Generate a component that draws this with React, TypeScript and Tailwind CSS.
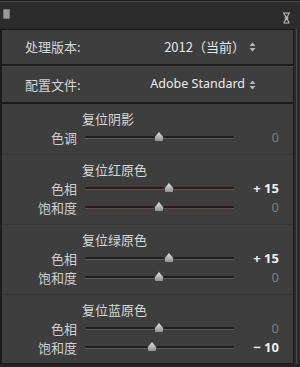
const FONT = { fontFamily: '"Noto Sans CJK SC", "Noto Sans", sans-serif' };

type Row = { label: string; value: string; pos: number; bright?: boolean; red?: boolean };
type Section = { title: string; rows: Row[]; last?: boolean };

const sections: Section[] = [
  { title: '复位阴影', rows: [{ label: '色调', value: '0', pos: 0 }] },
  {
    title: '复位红原色',
    rows: [
      { label: '色相', value: '+ 15', pos: 15, bright: true, red: true },
      { label: '饱和度', value: '0', pos: 0, red: true },
    ],
  },
  {
    title: '复位绿原色',
    rows: [
      { label: '色相', value: '+ 15', pos: 15, bright: true },
      { label: '饱和度', value: '0', pos: 0 },
    ],
  },
  {
    title: '复位蓝原色',
    rows: [
      { label: '色相', value: '0', pos: 0 },
      { label: '饱和度', value: '− 10', pos: -10, bright: true },
    ],
    last: true,
  },
];

function Thumb() {
  return (
    <svg width="10" height="11" viewBox="0 0 10 11">
      <defs>
        <linearGradient id="tg" x1="0" y1="0" x2="0" y2="1">
          <stop offset="0" stopColor="#e6e6e6" />
          <stop offset="1" stopColor="#8c8c8c" />
        </linearGradient>
      </defs>
      <path d="M5 0.5 L9.5 6 L9.5 9 Q9.5 10.5 8 10.5 L2 10.5 Q0.5 10.5 0.5 9 L0.5 6 Z" fill="url(#tg)" stroke="#2a2a2a" strokeWidth="0.6" />
    </svg>
  );
}

function Slider({ pos, red }: { pos: number; red?: boolean }) {
  // track spans 149px, center at 0, range roughly -100..100
  const left = 74 + pos * 0.68;
  return (
    <div className="relative w-[149px] h-[19px] flex items-center">
      <div className="w-full flex flex-col">
        <div className={`h-[2px] rounded-full ${red ? 'bg-[#2a1c1c]' : 'bg-[#1e1e1e]'}`} />
        <div className={`h-[1px] ${red ? 'bg-[#6a4a4a]' : 'bg-[#5c5c5c]'}`} />
      </div>
      <div className="absolute top-[3px]" style={{ left: left - 5 }}>
        <Thumb />
      </div>
    </div>
  );
}

function Arrows() {
  return (
    <svg width="7" height="10" viewBox="0 0 7 10" className="ml-[4px]">
      <path d="M3.5 0.5 L6.5 4 L0.5 4 Z" fill="#b5b5b5" />
      <path d="M3.5 9.5 L6.5 6 L0.5 6 Z" fill="#b5b5b5" />
    </svg>
  );
}

export default function App() {
  return (
    <div className="w-[300px] h-[367px] bg-[#242424] flex flex-col overflow-hidden" style={FONT}>
      {/* header bar */}
      <div className="h-[2px] bg-[#1a1a1a] border-b border-[#444]" />
      <div className="h-[27px] bg-[#2c2c2c] flex items-start justify-between px-[3px]">
        <div className="mt-[7px] w-[7px] h-[10px] border border-[#777] bg-[#9a9a9a] rounded-[1px]" />
        <svg width="9" height="12" viewBox="0 0 9 12" className="mt-[10px] mr-[6px]">
          <path d="M1 1 H8 M1.5 11 H7.5 M2 1.5 L7 10.5 M7 1.5 L2 10.5 M2.5 6 H6.5" stroke="#bdbdbd" strokeWidth="1.2" fill="none" />
        </svg>
      </div>

      <div className="flex-1 flex pb-[3px]">
        <div className="w-[2px] bg-[#1c1c1c]" />
        <div className="flex-1 flex flex-col bg-[#3e3e3e] border-t border-[#1a1a1a] border-r border-r-[#1a1a1a] border-b border-b-[#1a1a1a]">
          {/* process version */}
          <div className="h-[34px] flex items-center justify-between pl-[23px] pr-[37px] text-[13px] text-[#d4d4d4]">
            <span>处理版本:</span>
            <span className="flex items-center text-[#e6e6e6]">
              2012（当前）
              <Arrows />
            </span>
          </div>
          <div className="h-[2px] bg-[#1c1c1c]" />
          <div className="h-[1px] bg-[#4a4a4a]" />
          {/* profile */}
          <div className="h-[35px] flex items-center justify-between pl-[23px] pr-[37px] text-[13px] text-[#d4d4d4]">
            <span>配置文件:</span>
            <span className="flex items-center text-[12.5px] text-[#ececec]" style={{ fontFamily: '"Noto Sans", sans-serif' }}>
              Adobe Standard
              <Arrows />
            </span>
          </div>
          <div className="h-[2px] bg-[#1c1c1c]" />

          {sections.map((s, i) => (
            <div
              key={i}
              className={`pt-[5px] ${s.last ? 'pb-[3px]' : 'pb-[7px] border-b border-[#363636]'}`}
            >
              <div className="h-[19px] flex items-center pl-[80px] text-[13px] text-[#d8d8d8]">{s.title}</div>
              {s.rows.map((r, j) => (
                <div key={j} className="h-[19px] flex items-center">
                  <div className="w-[75px] text-right text-[13px] text-[#cfcfcf]">{r.label}</div>
                  <div className="ml-[8px]">
                    <Slider pos={r.pos} red={r.red} />
                  </div>
                  <div
                    className={`flex-1 text-right pr-[14px] text-[13px] ${r.bright ? 'text-[#f0f0f0] font-bold' : 'text-[#7c7c7c]'}`}
                    style={{ fontFamily: '"Noto Sans", sans-serif' }}
                  >
                    {r.value}
                  </div>
                </div>
              ))}
            </div>
          ))}
        </div>
        <div className="w-[6px] bg-[#2a2a2a] flex">
          <div className="w-[2px]" />
          <div className="w-[1px] bg-[#4a4a4a]" />
        </div>
      </div>
    </div>
  );
}
